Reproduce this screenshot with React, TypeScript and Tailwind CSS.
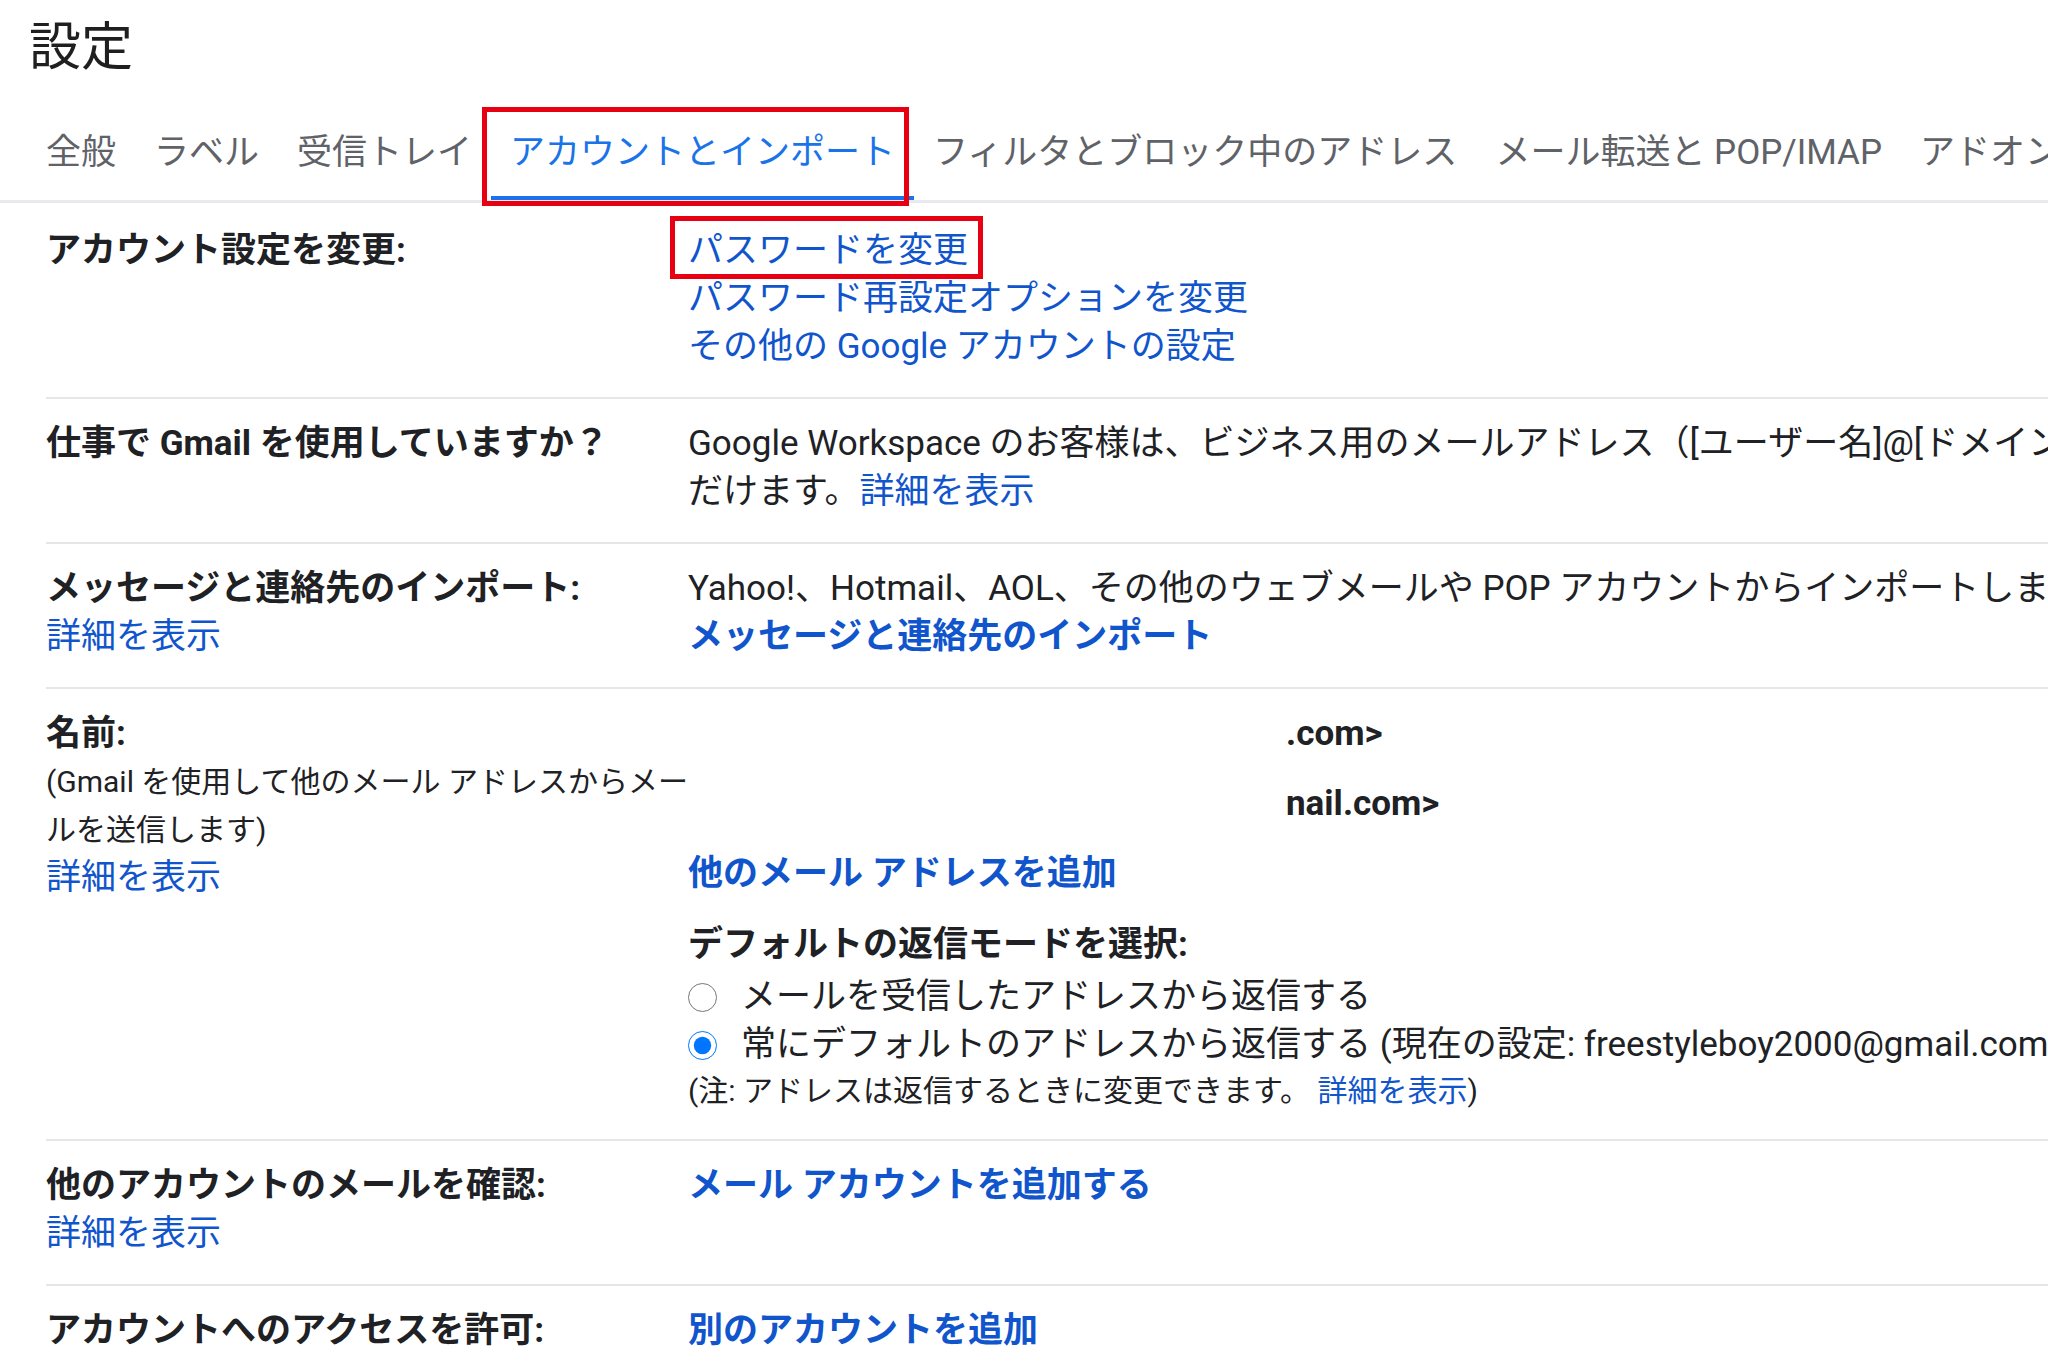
import type { ReactNode } from 'react';

const tabs = [
  '全般',
  'ラベル',
  '受信トレイ',
  'アカウントとインポート',
  'フィルタとブロック中のアドレス',
  'メール転送と POP/IMAP',
  'アドオン',
  'チャットと Meet',
];

function Link({ children, bold }: { children: ReactNode; bold?: boolean }) {
  return (
    <a className={`text-[#1155cc] cursor-pointer ${bold ? 'font-bold' : ''}`}>{children}</a>
  );
}

function Row({ label, children }: { label: ReactNode; children: ReactNode }) {
  return (
    <div className="flex border-b-2 border-[#e6e6e6] pt-[21px] pb-[26px]">
      <div className="w-[642px] shrink-0">{label}</div>
      <div className="flex-1 whitespace-nowrap">{children}</div>
    </div>
  );
}

export default function App() {
  return (
    <div className="min-h-screen w-full overflow-hidden bg-white text-[35px] leading-[48px] text-[#202124] font-['Roboto','Noto_Sans_CJK_JP',sans-serif]">
      <h1 className="pl-[29px] pt-[16px] text-[52px] leading-[64px] font-normal text-[#1f1f1f]">設定</h1>

      <div className="mt-[30px] flex whitespace-nowrap border-b-[3px] border-[#e8eaed] pl-[27px]">
        {tabs.map((t) =>
          t === 'アカウントとインポート' ? (
            <div
              key={t}
              className="relative shrink-0 border-b-4 border-[#1a73e8] px-[19px] pt-[19px] pb-[19px] text-[#1a73e8]"
            >
              {t}
              <span className="pointer-events-none absolute left-[-9px] right-[5px] top-[-3px] bottom-[-10px] border-[5px] border-[#e60012]" />
            </div>
          ) : (
            <div
              key={t}
              className="shrink-0 border-b-4 border-transparent px-[19px] pt-[19px] pb-[19px] text-[#5f6368]"
            >
              {t}
            </div>
          )
        )}
      </div>

      <div className="ml-[46px] mt-[3px]">
        <Row label={<div className="font-bold">アカウント設定を変更:</div>}>
          <div>
            <span className="relative inline-block">
              <Link>パスワードを変更</Link>
              <span className="pointer-events-none absolute left-[-18px] right-[-15px] top-[-11px] bottom-[-4px] border-[5px] border-[#e60012]" />
            </span>
          </div>
          <div>
            <Link>パスワード再設定オプションを変更</Link>
          </div>
          <div>
            <Link>その他の Google アカウントの設定</Link>
          </div>
        </Row>

        <Row label={<div className="font-bold">仕事で Gmail を使用していますか？</div>}>
          <div>Google Workspace のお客様は、ビジネス用のメールアドレス（[ユーザー名]@[ドメイン名]）を使用して Gmail をご利用いた</div>
          <div>
            だけます。<Link>詳細を表示</Link>
          </div>
        </Row>

        <Row
          label={
            <>
              <div className="font-bold">メッセージと連絡先のインポート:</div>
              <Link>詳細を表示</Link>
            </>
          }
        >
          <div>Yahoo!、Hotmail、AOL、その他のウェブメールや POP アカウントからインポートします。</div>
          <div>
            <Link bold>メッセージと連絡先のインポート</Link>
          </div>
        </Row>

        <Row
          label={
            <>
              <div className="font-bold">名前:</div>
              <div className="whitespace-nowrap text-[30px]">
                (Gmail を使用して他のメール アドレスからメー
                <br />
                ルを送信します)
              </div>
              <Link>詳細を表示</Link>
            </>
          }
        >
          <div className="mb-[22px] pl-[598px] font-bold">.com&gt;</div>
          <div className="mb-[22px] pl-[598px] font-bold">nail.com&gt;</div>
          <div className="mb-[23px]">
            <Link bold>他のメール アドレスを追加</Link>
          </div>
          <div className="font-bold">デフォルトの返信モードを選択:</div>
          <label className="mt-[4px] flex h-[48px] items-center gap-[24px]">
            <input type="radio" name="reply" className="m-0 h-[29px] w-[29px] accent-[#0075ff]" />
            <span>メールを受信したアドレスから返信する</span>
          </label>
          <label className="flex h-[48px] items-center gap-[24px]">
            <input
              type="radio"
              name="reply"
              defaultChecked
              className="m-0 h-[29px] w-[29px] accent-[#0075ff]"
            />
            <span>常にデフォルトのアドレスから返信する (現在の設定: freestyleboy2000@gmail.com)</span>
          </label>
          <div className="text-[30px] leading-[44px]">
            (注: アドレスは返信するときに変更できます。 <Link>詳細を表示</Link>)
          </div>
        </Row>

        <Row
          label={
            <>
              <div className="font-bold">他のアカウントのメールを確認:</div>
              <Link>詳細を表示</Link>
            </>
          }
        >
          <Link bold>メール アカウントを追加する</Link>
        </Row>

        <Row label={<div className="font-bold">アカウントへのアクセスを許可:</div>}>
          <Link bold>別のアカウントを追加</Link>
        </Row>
      </div>
    </div>
  );
}
